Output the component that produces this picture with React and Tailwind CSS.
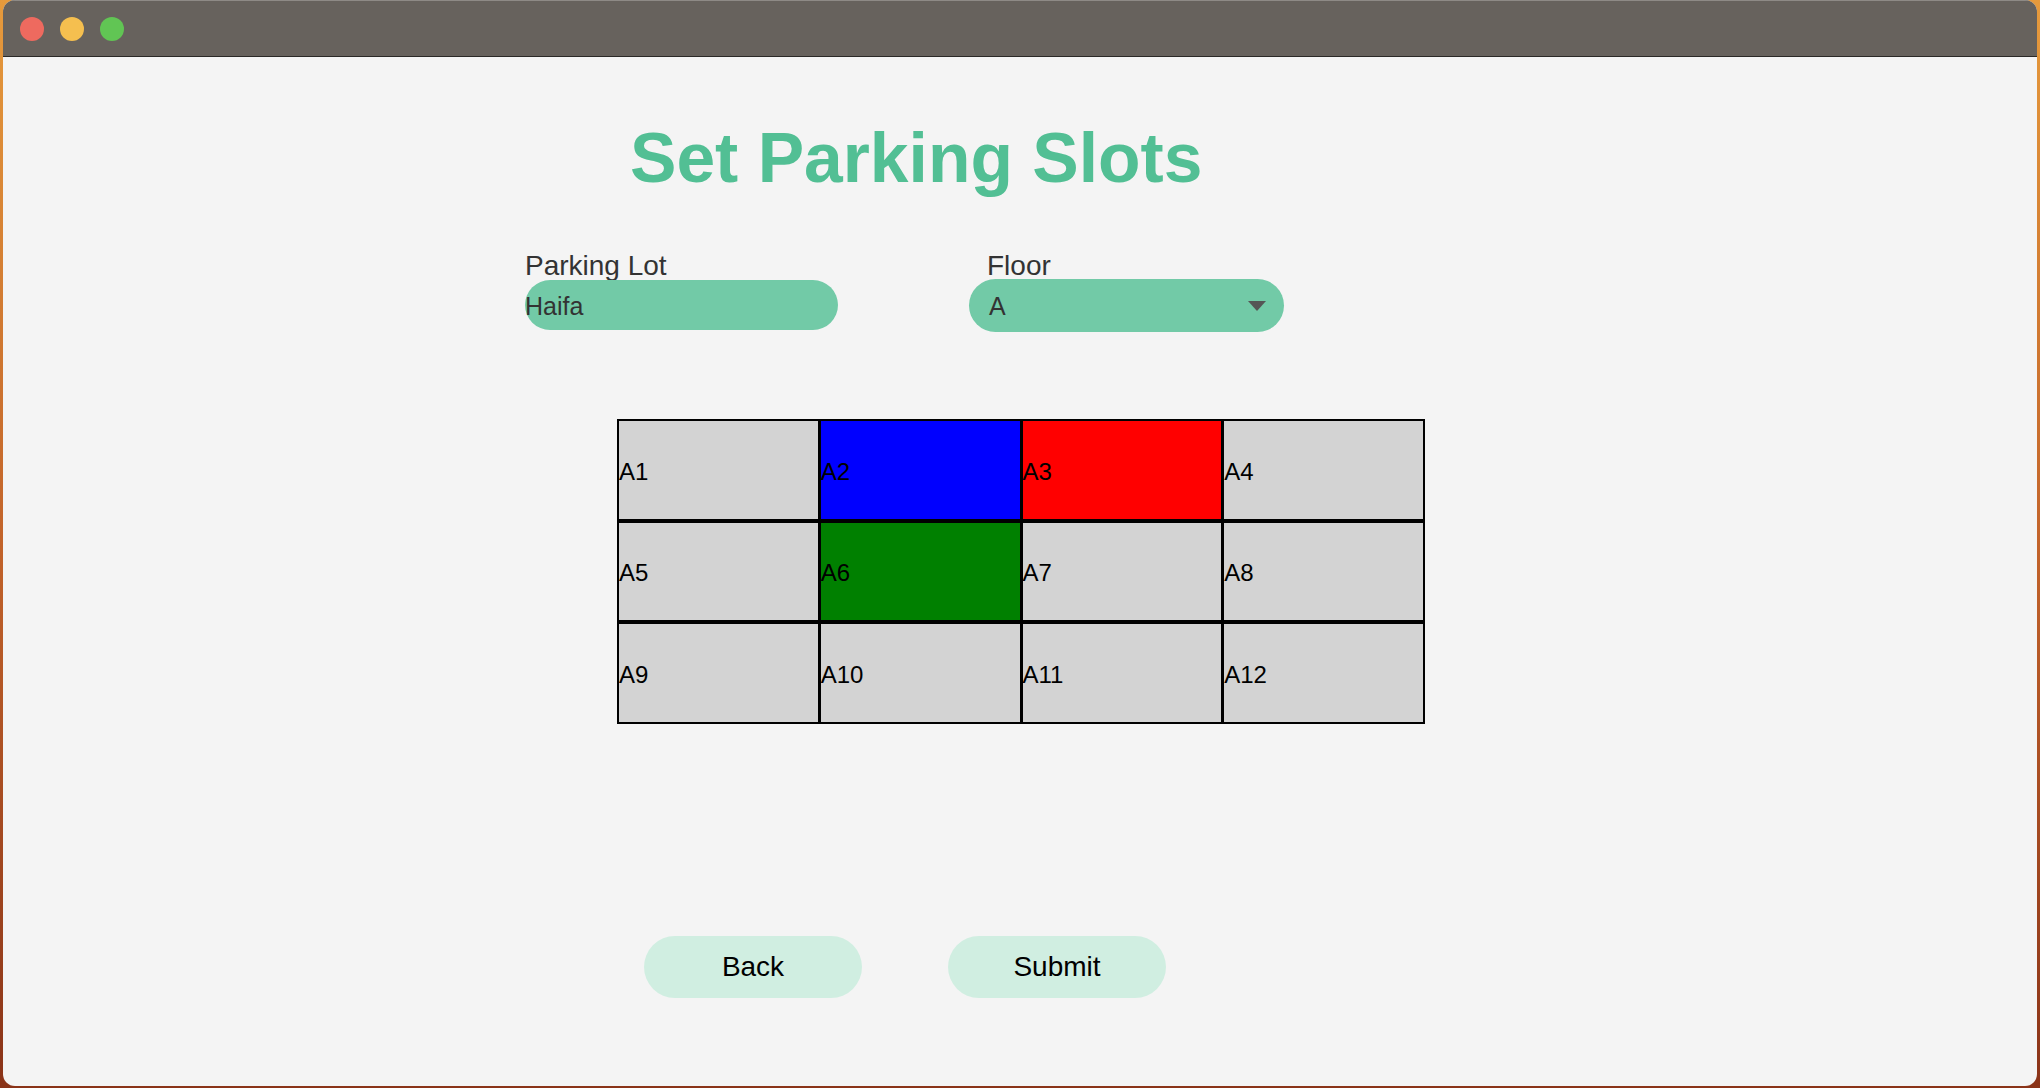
export default function App() {
  const slots = [
    { id: 'A1', color: 'bg-[#d3d3d3]' },
    { id: 'A2', color: 'bg-[#0000ff]' },
    { id: 'A3', color: 'bg-[#ff0000]' },
    { id: 'A4', color: 'bg-[#d3d3d3]' },
    { id: 'A5', color: 'bg-[#d3d3d3]' },
    { id: 'A6', color: 'bg-[#008000]' },
    { id: 'A7', color: 'bg-[#d3d3d3]' },
    { id: 'A8', color: 'bg-[#d3d3d3]' },
    { id: 'A9', color: 'bg-[#d3d3d3]' },
    { id: 'A10', color: 'bg-[#d3d3d3]' },
    { id: 'A11', color: 'bg-[#d3d3d3]' },
    { id: 'A12', color: 'bg-[#d3d3d3]' },
  ];

  return (
    <div className="h-screen w-full bg-gradient-to-b from-[#e69a3c] via-[#c2632a] to-[#8a3318] px-[3px] pb-[2px] font-['Liberation_Sans',Arial,sans-serif]">
      <div className="flex h-full flex-col overflow-hidden rounded-[12px] bg-[#f4f4f4]">
        {/* title bar */}
        <div className="flex h-[57px] shrink-0 items-center gap-[16px] border-t border-t-[#8e8a86] border-b border-b-[#2b2927] bg-[#67625d] pl-[17px]">
          <span className="h-[24px] w-[24px] rounded-full bg-[#ee6a5f]" />
          <span className="h-[24px] w-[24px] rounded-full bg-[#f5bf4f]" />
          <span className="h-[24px] w-[24px] rounded-full bg-[#61c554]" />
        </div>

        <div className="flex flex-col">
          <h1 className="ml-[627px] mt-[66px] text-[69.6px] font-bold leading-[70px] text-[#52bf94]">
            Set Parking Slots
          </h1>

          <div className="ml-[522px] mt-[59px] flex">
            <div className="flex w-[313px] flex-col">
              <label className="h-[28px] text-[28px] leading-[28px] text-[#333]">Parking Lot</label>
              <div className="flex h-[50px] items-center rounded-full bg-[#72caa7] pt-[4px] text-[25px] text-[#333]">
                Haifa
              </div>
            </div>
            <div className="ml-[131px] flex w-[315px] flex-col">
              <label className="h-[27px] pl-[18px] text-[28px] leading-[28px] text-[#333]">Floor</label>
              <div className="flex h-[53px] items-center justify-between rounded-full bg-[#72caa7] pl-[20px] pr-[18px] text-[25px] text-[#333]">
                <span className="pt-[3px]">A</span>
                <svg width="18" height="10" viewBox="0 0 18 10">
                  <path d="M0 0 H18 L9 10 Z" fill="#555" />
                </svg>
              </div>
            </div>
          </div>

          <div className="ml-[614px] mt-[87px] grid h-[305px] w-[808px] grid-cols-4 grid-rows-3 gap-x-[3px] gap-y-[4px] border-2 border-black bg-black">
            {slots.map((s) => (
              <div key={s.id} className={`flex items-center pt-[4px] ${s.color} text-[24px] text-black`}>
                {s.id}
              </div>
            ))}
          </div>

          <div className="ml-[641px] mt-[212px] flex gap-[86px]">
            <button className="h-[62px] w-[218px] rounded-full bg-[#d0eee1] text-[28px] text-black">
              Back
            </button>
            <button className="h-[62px] w-[218px] rounded-full bg-[#d0eee1] text-[28px] text-black">
              Submit
            </button>
          </div>
        </div>
      </div>
    </div>
  );
}
